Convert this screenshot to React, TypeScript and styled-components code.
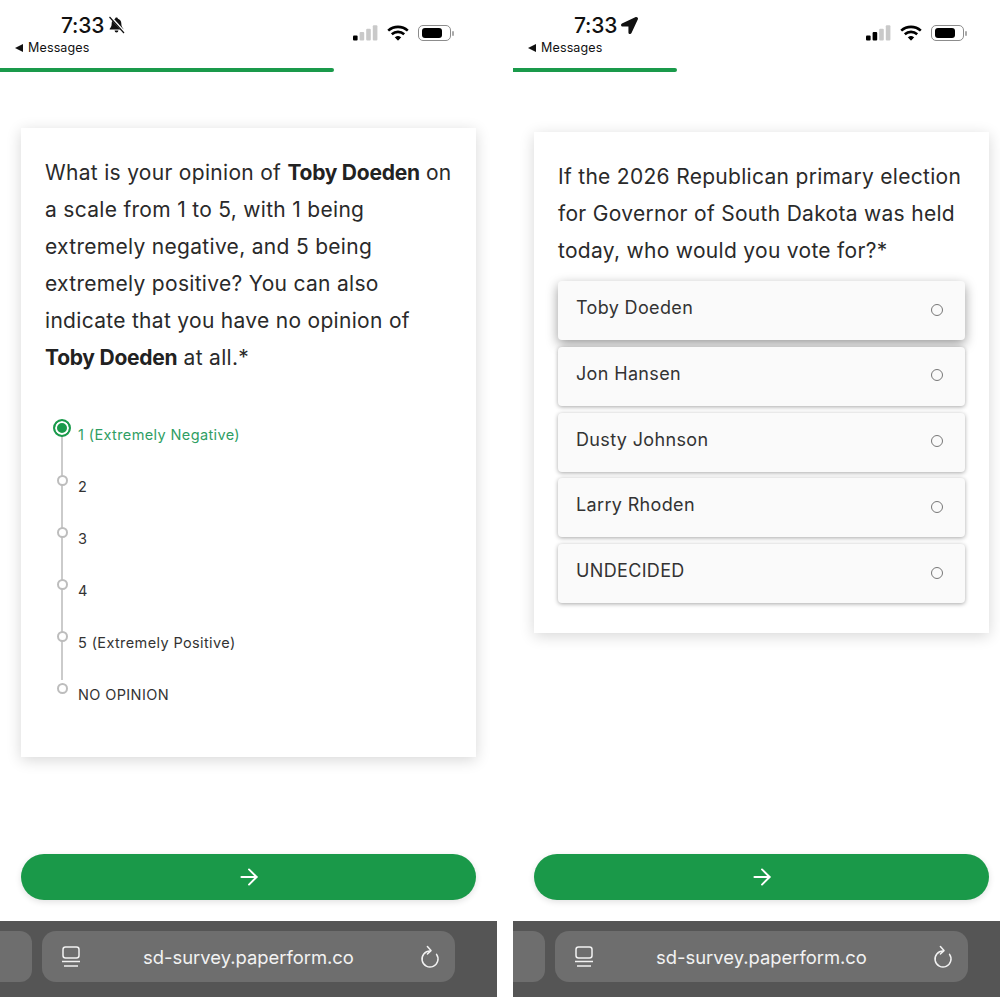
import type { ReactNode } from 'react';
import styled, { createGlobalStyle } from 'styled-components';
import { ArrowRight } from 'lucide-react';
import { FaLocationArrow } from 'react-icons/fa';

const GlobalStyle = createGlobalStyle`
    html, body {
        margin: 0;
        padding: 0;
        background: #fff;
        overflow: hidden;
    }
    * {
        box-sizing: border-box;
    }
`;

const Page = styled.div`
    display: flex;
    gap: 16px;
    width: 1000px;
    height: 997px;
    overflow: hidden;
    font-family: Inter, 'Liberation Sans', sans-serif;
    color: #222;
`;

const Phone = styled.div<{ $width: number }>`
    display: flex;
    flex-direction: column;
    flex: none;
    width: ${p => p.$width}px;
    height: 997px;
`;

const StatusBar = styled.div`
    display: grid;
    grid-template-columns: 353px auto;
    flex: none;
    height: 68px;
    color: #111;
`;

const StatusLeft = styled.div`
    display: flex;
    flex-direction: column;
    padding: 13px 0 0 15px;
`;

const TimeRow = styled.div`
    display: flex;
    align-items: center;
    gap: 4px;
    height: 24px;
    margin-left: 46px;
    font-size: 21px;
    font-weight: 500;
    letter-spacing: -0.2px;
`;

const BackLink = styled.div`
    display: flex;
    align-items: center;
    gap: 5px;
    height: 21px;
    font-size: 12.5px;
    font-weight: 400;
    letter-spacing: 0.15px;
`;

const BackCaret = styled.span`
    width: 0;
    height: 0;
    border-top: 4px solid transparent;
    border-bottom: 4px solid transparent;
    border-right: 8px solid #111;
`;

const StatusRight = styled.div`
    display: flex;
    align-items: center;
    gap: 9px;
    height: 20px;
    margin-top: 23px;
`;

const BatteryShell = styled.div`
    display: flex;
    align-items: center;
    width: 33px;
    height: 16px;
    padding: 2px 3px;
    border: 1px solid #8c8c8c;
    border-radius: 5px;
`;

const BatteryFill = styled.div`
    width: 20px;
    height: 10px;
    border-radius: 3px;
    background: #000;
`;

const BatteryTip = styled.div`
    width: 1.5px;
    height: 5px;
    margin-left: -8px;
    border-radius: 1px;
    background: #aaa;
`;

const Progress = styled.div<{ $width: number }>`
    flex: none;
    width: ${p => p.$width}px;
    height: 4px;
    background: #1a9a4b;
    border-radius: 0 2px 2px 0;
`;

const Main = styled.main<{ $top: number }>`
    display: flex;
    flex-direction: column;
    flex: 1;
    padding: ${p => p.$top}px 21px 21px;
    width: 497px;
`;

const Card = styled.section<{ $bottom: number }>`
    flex: none;
    width: 455px;
    padding: 26px 24px ${p => p.$bottom}px;
    background: #fff;
    box-shadow: 0 3px 14px rgba(0, 0, 0, 0.16);
`;

const Question = styled.p`
    margin: 0;
    font-size: 21px;
    font-weight: 400;
    line-height: 37px;
    letter-spacing: 0.3px;
    color: #2a2a2a;

    strong {
        font-weight: 700;
        letter-spacing: -0.25px;
        color: #222;
    }
`;

const Steps = styled.div`
    display: flex;
    flex-direction: column;
    margin: 44px 0 0 8px;
`;

const Step = styled.div<{ $last?: boolean }>`
    display: flex;
    gap: 7px;
    height: ${p => (p.$last ? 18 : 52)}px;
`;

const Rail = styled.div<{ $last?: boolean }>`
    display: flex;
    justify-content: center;
    flex: none;
    width: 18px;
    height: 100%;
    background: ${p =>
        p.$last ? 'none' : 'linear-gradient(#cbcbcb, #cbcbcb) center / 2px 100% no-repeat'};
`;

const StepDot = styled.div<{ $active?: boolean }>`
    flex: none;
    margin-top: ${p => (p.$active ? -1 : 3)}px;
    width: ${p => (p.$active ? 18 : 11)}px;
    height: ${p => (p.$active ? 18 : 11)}px;
    border-radius: 50%;
    background: ${p => (p.$active ? '#1a9a4b' : '#fff')};
    border: 2px solid ${p => (p.$active ? '#1a9a4b' : '#bdbdbd')};
    box-shadow: ${p => (p.$active ? 'inset 0 0 0 2px #fff' : 'none')};
`;

const StepLabel = styled.div<{ $active?: boolean }>`
    margin-top: 6px;
    font-size: 14.5px;
    line-height: 18px;
    letter-spacing: 0.38px;
    color: ${p => (p.$active ? '#2f9e63' : '#333')};
`;

const Options = styled.div`
    display: flex;
    flex-direction: column;
    gap: 6.8px;
    margin-top: 12px;
`;

const Option = styled.div<{ $focused?: boolean }>`
    display: flex;
    align-items: center;
    justify-content: space-between;
    height: 59px;
    padding: 0 22px 6px 18px;
    background: #fafafa;
    border-radius: 4px;
    font-size: 18px;
    letter-spacing: 0.35px;
    color: #333;
    box-shadow: ${p =>
        p.$focused
            ? '0 4px 12px rgba(0, 0, 0, 0.4)'
            : '0 1px 4px rgba(0, 0, 0, 0.35)'};
`;

const OptionRadio = styled.span`
    flex: none;
    width: 12px;
    height: 12px;
    margin-top: 4px;
    border: 1.5px solid #777;
    border-radius: 50%;
`;

const NextButton = styled.button`
    display: flex;
    align-items: center;
    justify-content: center;
    width: 455px;
    height: 46px;
    margin-top: auto;
    padding: 0;
    border: 0;
    border-radius: 23px;
    background: #1a9949;
    color: #fff;
    box-shadow: 0 2px 6px rgba(0, 0, 0, 0.12);
`;

const BrowserBar = styled.div`
    display: flex;
    gap: 10px;
    flex: none;
    height: 76px;
    padding: 10px 0 0;
    background: #555;
`;

const TabStub = styled.div`
    flex: none;
    width: 32px;
    height: 51px;
    background: #6e6e6e;
    border-radius: 0 12px 12px 0;
`;

const UrlPill = styled.div`
    display: flex;
    align-items: center;
    justify-content: space-between;
    flex: none;
    width: 413px;
    height: 51px;
    padding: 0 15px 0 19px;
    background: #6e6e6e;
    border-radius: 14px;
    color: #f2f2f2;
    font-size: 18.4px;
`;

const UrlText = styled.span`
    margin-right: 4px;
`;

const NotchIcon = styled.span`
    display: flex;
    align-items: center;
    color: #111;
`;

const BellSlashIcon = () => (
    <svg width="17" height="18" viewBox="0 0 17 18">
        <path
            d="M8.5 1.5c.8 0 1.3.5 1.4 1.2 2.2.6 3.4 2.4 3.4 4.6 0 3 .8 4 2 5.4v.8H1.7v-.8c1.2-1.4 2-2.4 2-5.4 0-2.2 1.2-4 3.4-4.6.1-.7.6-1.2 1.4-1.2z"
            fill="#111"
        />
        <path d="M6.6 14.6h3.8a1.9 1.9 0 0 1-3.8 0z" fill="#111" />
        <path d="M2 0.5L16.5 16.5" stroke="#fff" strokeWidth="2.6" />
        <path d="M1.5 1L16 17" stroke="#111" strokeWidth="1.2" />
    </svg>
);

const SignalIcon = ({ level }: { level: number }) => (
    <svg width="25" height="16" viewBox="0 0 25 16">
        {[0, 1, 2, 3].map(i => {
            const h = 5 + i * 3.4;
            return (
                <rect
                    key={i}
                    x={i * 6.6}
                    y={15.5 - h}
                    width="4.6"
                    height={h}
                    rx="1"
                    fill={i < level ? '#000' : '#c9c9c9'}
                />
            );
        })}
    </svg>
);

const WifiIcon = () => (
    <svg width="22" height="16" viewBox="0 0 22 16" fill="none" stroke="#000" strokeWidth="2.6">
        <path d="M1.2 5.6C6.8 .6 15.2 .6 20.8 5.6" />
        <path d="M4.8 9.2c3.6-3.1 8.8-3.1 12.4 0" />
        <path d="M8.3 12.4c1.6-1.2 3.8-1.2 5.4 0L11 15.2z" fill="#000" strokeWidth="1" />
    </svg>
);

const TabsIcon = () => (
    <svg width="20" height="22" viewBox="0 0 20 22" fill="none" stroke="#f2f2f2" strokeWidth="1.5">
        <rect x="2" y="1" width="16" height="11" rx="2.5" />
        <path d="M1 15.5h18" />
        <path d="M3 20h14" />
    </svg>
);

const ReloadIcon = () => (
    <svg width="20" height="24" viewBox="0 0 20 24" fill="none" stroke="#f2f2f2" strokeWidth="1.5">
        <path d="M10 6A8 8 0 1 0 16.55 9.4" strokeLinecap="round" />
        <path d="M7.4 1.6L11 5.6l-3.6 3.4" strokeLinecap="round" strokeLinejoin="round" />
    </svg>
);

const PhoneChrome = ({ icon, level }: { icon: ReactNode; level: number }) => (
    <StatusBar>
        <StatusLeft>
            <TimeRow>
                7:33
                <NotchIcon>{icon}</NotchIcon>
            </TimeRow>
            <BackLink>
                <BackCaret />
                Messages
            </BackLink>
        </StatusLeft>
        <StatusRight>
            <SignalIcon level={level} />
            <WifiIcon />
            <BatteryShell>
                <BatteryFill />
            </BatteryShell>
            <BatteryTip />
        </StatusRight>
    </StatusBar>
);

const BottomChrome = () => (
    <BrowserBar>
        <TabStub />
        <UrlPill>
            <TabsIcon />
            <UrlText>sd-survey.paperform.co</UrlText>
            <ReloadIcon />
        </UrlPill>
    </BrowserBar>
);

const scale = ['1 (Extremely Negative)', '2', '3', '4', '5 (Extremely Positive)', 'NO OPINION'];
const candidates = ['Toby Doeden', 'Jon Hansen', 'Dusty Johnson', 'Larry Rhoden', 'UNDECIDED'];

const App = () => (
    <>
        <GlobalStyle />
        <Page>
            <Phone $width={497}>
                <PhoneChrome icon={<BellSlashIcon />} level={1} />
                <Progress $width={334} />
                <Main $top={56}>
                    <Card $bottom={59}>
                        <Question>
                            What is your opinion of <strong>Toby Doeden</strong> on a scale from 1 to 5, with 1 being
                            extremely negative, and 5 being extremely positive? You can also indicate that you have
                            no opinion of <strong>Toby Doeden</strong> at all.*
                        </Question>
                        <Steps>
                            {scale.map((label, i) => (
                                <Step key={label} $last={i === scale.length - 1}>
                                    <Rail $last={i === scale.length - 1}>
                                        <StepDot $active={i === 0} />
                                    </Rail>
                                    <StepLabel $active={i === 0}>{label}</StepLabel>
                                </Step>
                            ))}
                        </Steps>
                    </Card>
                    <NextButton aria-label="Next">
                        <ArrowRight size={26} strokeWidth={1.8} />
                    </NextButton>
                </Main>
                <BottomChrome />
            </Phone>
            <Phone $width={487}>
                <PhoneChrome icon={<FaLocationArrow size={17} />} level={2} />
                <Progress $width={164} />
                <Main $top={60}>
                    <Card $bottom={30}>
                        <Question>
                            If the 2026 Republican primary election for Governor of South Dakota was held today, who
                            would you vote for?*
                        </Question>
                        <Options>
                            {candidates.map((name, i) => (
                                <Option key={name} $focused={i === 0}>
                                    {name}
                                    <OptionRadio />
                                </Option>
                            ))}
                        </Options>
                    </Card>
                    <NextButton aria-label="Next">
                        <ArrowRight size={26} strokeWidth={1.8} />
                    </NextButton>
                </Main>
                <BottomChrome />
            </Phone>
        </Page>
    </>
);

export default App;
